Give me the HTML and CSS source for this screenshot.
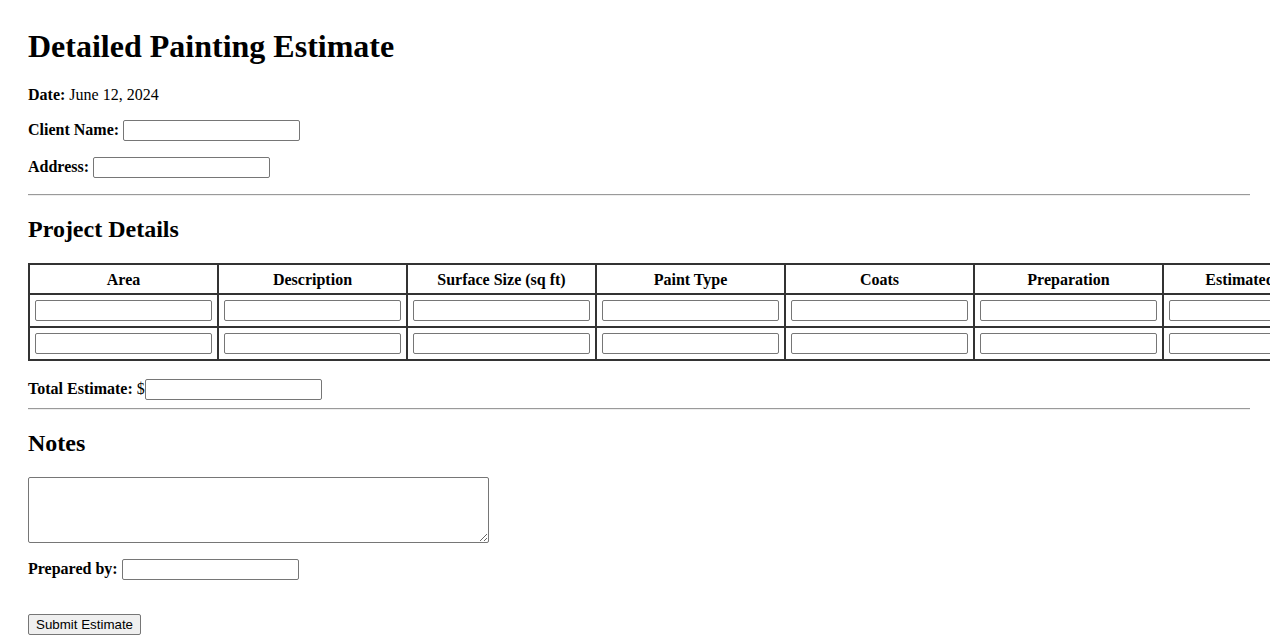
FILE: index.html
```html
<!DOCTYPE html>
<html lang="en">
<head>
<meta charset="utf-8">
<title>Detailed Painting Estimate</title>
<link rel="stylesheet" href="styles.css">
</head>
<body>
<h1 class="title">Detailed Painting Estimate</h1>
<p class="field"><strong>Date:</strong> June 12, 2024</p>
<p class="field"><label><strong>Client Name:</strong> <input type="text" class="text-input"></label></p>
<p class="field"><label><strong>Address:</strong> <input type="text" class="text-input"></label></p>
<hr class="rule">
<h2 class="section-title">Project Details</h2>
<table class="estimate-table">
  <thead>
    <tr>
      <th>Area</th>
      <th>Description</th>
      <th>Surface Size (sq ft)</th>
      <th>Paint Type</th>
      <th>Coats</th>
      <th>Preparation</th>
      <th>Estimated Cost</th>
    </tr>
  </thead>
  <tbody>
    <tr>
      <td><input type="text" class="text-input cell-input"></td>
      <td><input type="text" class="text-input cell-input"></td>
      <td><input type="text" class="text-input cell-input"></td>
      <td><input type="text" class="text-input cell-input"></td>
      <td><input type="text" class="text-input cell-input"></td>
      <td><input type="text" class="text-input cell-input"></td>
      <td><input type="text" class="text-input cell-input"></td>
    </tr>
    <tr>
      <td><input type="text" class="text-input cell-input"></td>
      <td><input type="text" class="text-input cell-input"></td>
      <td><input type="text" class="text-input cell-input"></td>
      <td><input type="text" class="text-input cell-input"></td>
      <td><input type="text" class="text-input cell-input"></td>
      <td><input type="text" class="text-input cell-input"></td>
      <td><input type="text" class="text-input cell-input"></td>
    </tr>
  </tbody>
</table>
<div class="total"><strong>Total Estimate:</strong> $<input type="text" class="text-input"></div>
<hr class="rule">
<h2 class="section-title">Notes</h2>
<div class="notes"><textarea class="notes-area"></textarea></div>
<p class="field"><label><strong>Prepared by:</strong> <input type="text" class="text-input"></label></p>
<div class="actions"><button type="button" class="submit-btn">Submit Estimate</button></div>
</body>
</html>
```
FILE: styles.css
```css
html {
  overflow: hidden;
}

body {
  margin: 8px;
  padding: 20px;
  font-family: "Liberation Serif", "Times New Roman", serif;
  font-size: 16px;
  color: #000;
  background: #fff;
}

.title {
  font-size: 32px;
  font-weight: bold;
  margin: 0 0 21.44px;
}

.field {
  margin: 16px 0;
}

.text-input {
  box-sizing: border-box;
  width: 177px;
  height: 21px;
  padding: 1px 2px;
  border: 1px solid #767676;
  border-radius: 2px;
  font-family: "Liberation Sans", Arial, sans-serif;
  font-size: 13.33px;
  background: #fff;
  vertical-align: baseline;
}

.rule {
  margin: 8px 0;
  border: 0;
  border-top: 1px solid #9a9a9a;
  border-bottom: 1px solid #eeeeee;
  height: 0;
}

.section-title {
  font-size: 24px;
  font-weight: bold;
  margin: 19.92px 0;
}

.estimate-table {
  border: 1px solid #333;
  border-spacing: 0;
  margin: 20px 0 18px;
}

.estimate-table th,
.estimate-table td {
  border: 1px solid #333;
  width: 177px;
  min-width: 177px;
  max-width: 177px;
}

.estimate-table th {
  padding: 6px 5px 4px;
  line-height: 18px;
  text-align: center;
  font-weight: bold;
  white-space: nowrap;
}

.estimate-table td {
  padding: 5px;
}

.cell-input {
  display: block;
}

.total {
  margin: 0;
}

.notes {
  margin: 0;
}

.notes-area {
  display: block;
  box-sizing: border-box;
  width: 461px;
  height: 66px;
  border: 1px solid #767676;
  border-radius: 2px;
  padding: 2px;
  margin: 0;
}

.actions {
  margin-top: 34px;
}

.submit-btn {
  box-sizing: border-box;
  height: 21px;
  padding: 1px 7px;
  border: 1px solid #767676;
  border-radius: 2px;
  background: #efefef;
  font-family: "Liberation Sans", Arial, sans-serif;
  font-size: 13.33px;
  color: #000;
}
```
